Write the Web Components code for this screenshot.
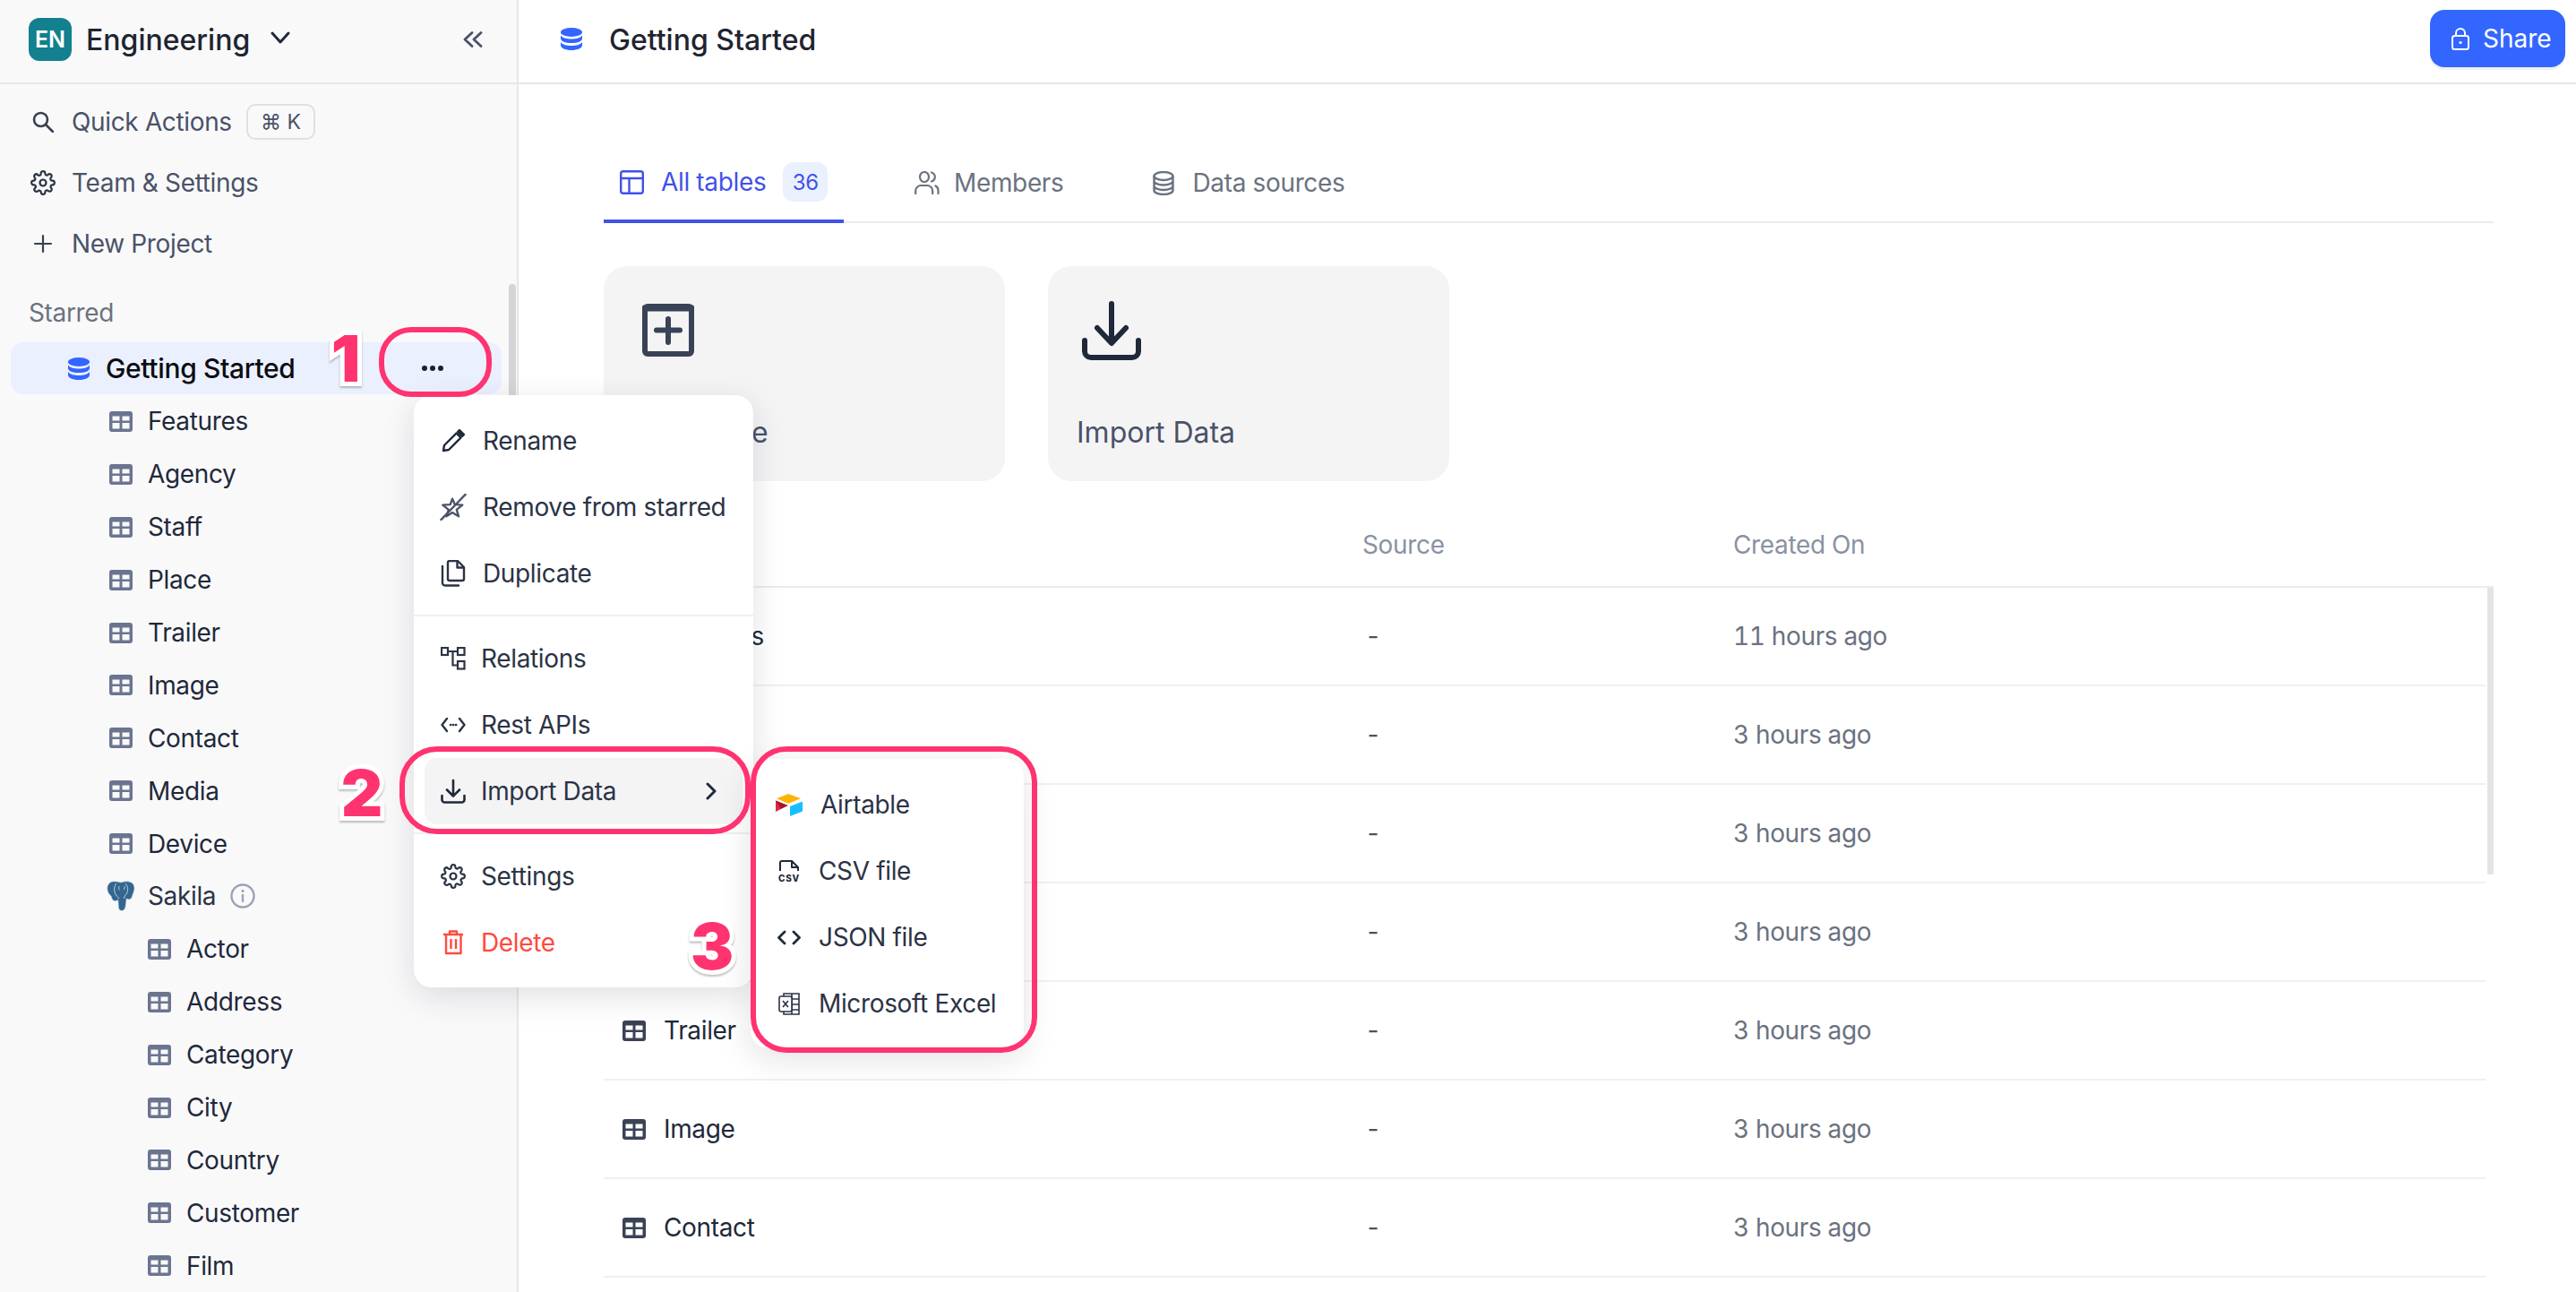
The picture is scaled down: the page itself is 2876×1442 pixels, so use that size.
<!DOCTYPE html>
<html>
<head>
<meta charset="utf-8">
<title>Getting Started</title>
<style>
    html, body { margin: 0; padding: 0; width: 2876px; height: 1442px; overflow: hidden; background: #fff; }
    body { font-family: Inter, "Liberation Sans", sans-serif; font-size: 28px; letter-spacing: -.35px; color: #1f293a; }
</style>
</head>
<body>
<app-shell>
    <side-bar slot="side"></side-bar>
    <top-bar slot="top" title="Getting Started"></top-bar>
    <tab-bar slot="main"></tab-bar>
    <action-cards slot="main"></action-cards>
    <table-list slot="main"></table-list>
</app-shell>

<ctx-menu style="left:462px;top:441px;width:379px">
    <menu-item icon="pencil" nudge="1">Rename</menu-item>
    <menu-item icon="unstar" nudge="1">Remove from starred</menu-item>
    <menu-item icon="copy" nudge="1">Duplicate</menu-item>
    <menu-line></menu-line>
    <menu-item icon="relations" nudge="-1">Relations</menu-item>
    <menu-item icon="api" nudge="-1">Rest APIs</menu-item>
    <menu-item icon="download" nudge="-1" active arrow>Import Data</menu-item>
    <menu-line></menu-line>
    <menu-item icon="gear" nudge="-1">Settings</menu-item>
    <menu-item icon="trash" nudge="-1" danger>Delete</menu-item>
</ctx-menu>

<ctx-menu style="left:838px;top:847px;width:305px">
    <menu-item icon="airtable" nudge="2" wide>Airtable</menu-item>
    <menu-item icon="csv" wide>CSV file</menu-item>
    <menu-item icon="code" wide>JSON file</menu-item>
    <menu-item icon="excel" wide>Microsoft Excel</menu-item>
</ctx-menu>

<call-out style="left:423px;top:365px;width:126px;height:78px;border-radius:36px"></call-out>
<call-out style="left:446px;top:833px;width:392px;height:98px;border-radius:42px"></call-out>
<call-out style="left:838px;top:833px;width:320px;height:342px;border-radius:40px"></call-out>
<call-num style="left:386px;top:400px">1</call-num>
<call-num style="left:404px;top:885px">2</call-num>
<call-num style="left:795px;top:1056px">3</call-num>

<script>
const ICONS = {
    grid: `<svg width="26" height="23" viewBox="0 0 26 23"><path fill="currentColor" fill-rule="evenodd" d="M3 0h20a3 3 0 0 1 3 3v17a3 3 0 0 1-3 3H3a3 3 0 0 1-3-3V3a3 3 0 0 1 3-3zM3.500 5.500V10.500h8V5.500zM14.500 5.500V10.500h8V5.500zM3.500 13v6.500h8V13zM14.500 13v6.500h8V13z"/></svg>`,
    db: `<svg width="24" height="25" viewBox="0 0 24 25" fill="#3366ff"><ellipse cx="12" cy="5" rx="12" ry="5"/><path d="M0 8.500c2 3 7 4 12 4s10-1 12-4V12c0 3-5 5-12 5S0 15 0 12z"/><path d="M0 16c2 3 7 4 12 4s10-1 12-4v3.500c0 3-5 5.500-12 5.500S0 22.500 0 19.500z"/></svg>`,
    search: `<svg width="24" height="24" viewBox="0 0 24 24" fill="none" stroke="#374151" stroke-width="2.600" stroke-linecap="round"><circle cx="9.500" cy="9.500" r="7.500"/><path d="M15 15l8 8"/></svg>`,
    gear: `<svg width="28" height="28" viewBox="0 0 24 24" fill="none" stroke="#2b3345" stroke-width="1.900" stroke-linecap="round" stroke-linejoin="round"><circle cx="12" cy="12" r="3"/><path d="M19.400 15a1.650 1.650 0 0 0 .33 1.820l.06.06a2 2 0 1 1-2.830 2.830l-.06-.06a1.650 1.650 0 0 0-2.820 1.170V21a2 2 0 1 1-4 0v-.09A1.650 1.650 0 0 0 7.260 19.800l-.06.06a2 2 0 1 1-2.830-2.830l.06-.06A1.650 1.650 0 0 0 3.260 14H3a2 2 0 1 1 0-4h.09A1.650 1.650 0 0 0 4.200 7.260l-.06-.06a2 2 0 1 1 2.830-2.830l.06.06A1.650 1.650 0 0 0 10 3.260V3a2 2 0 1 1 4 0v.09a1.650 1.650 0 0 0 2.820 1.170l.06-.06a2 2 0 1 1 2.830 2.830l-.06.06A1.650 1.650 0 0 0 20.740 10H21a2 2 0 1 1 0 4h-.09a1.650 1.650 0 0 0-1.510 1z"/></svg>`,
    plus: `<svg width="22" height="22" viewBox="0 0 22 22" stroke="#374151" stroke-width="2.200" stroke-linecap="round"><path d="M11 2v18M2 11h18"/></svg>`,
    chevDown: `<svg width="22" height="16" viewBox="0 0 22 16" fill="none" stroke="#1f293a" stroke-width="3" stroke-linecap="round" stroke-linejoin="round"><path d="M2 3l9 10 9-10"/></svg>`,
    chevsLeft: `<svg width="22" height="18" viewBox="0 0 22 18" fill="none" stroke="#4a5268" stroke-width="2.800" stroke-linecap="round" stroke-linejoin="round"><path d="M10 1.500L2 9l8 7.500M20 1.500L12 9l8 7.500"/></svg>`,
    elephant: `<svg width="32" height="34" viewBox="0 0 32 34"><path fill="#336791" stroke="#dfe6ee" stroke-width=".7" d="M7 .8c4-.6 7 .6 9 1 3-1 7-1.600 10-.6 4 1.400 5.500 4.600 5 8.500-.5 3-1.800 5.500-2.500 8-.6 2.200-2 3.200-4 3.200-1.200 0-2-.3-2.300-.8-.2 2-.4 5-.9 8-.5 3.300-1.800 5.400-4.300 5.400-2.300 0-3.700-1.500-3.800-4.400-.1-3-.2-5.800-.6-7.600-1 .8-2.700 1.400-4.200 1-2-.5-2.700-3-3.400-5.300C3.500 16 1.300 13.500.8 10 .2 5.500 2.500 1.500 7 .8z"/><path fill="none" stroke="#dfe6ee" stroke-width=".8" d="M11 3c-3 3-3 9-.5 13 1 1.600 2.500 1.800 3 4M21 3c3 3 3.500 8 1 12-1 1.500-2.500 2-2.500 5M14 6c-.6 2-.3 3.500.6 4.500M20 6c.3 1.600 0 3-.8 4"/></svg>`,
    info: `<svg width="28" height="28" viewBox="0 0 28 28" fill="none" stroke="#9aa4b8" stroke-width="2.400" stroke-linecap="round"><circle cx="14" cy="14" r="12.500"/><path d="M14 13v7"/><path d="M14 8.300v.2" stroke-width="3"/></svg>`,
    lock: `<svg width="20" height="25" viewBox="0 0 20 25" fill="none" stroke="#fff" stroke-width="2"><rect x="1" y="9" width="18" height="15" rx="2.500"/><path d="M5 9V6a5 5 0 0 1 10 0v3"/><circle cx="10" cy="16.500" r="1.600" fill="#fff" stroke="none"/></svg>`,
    layout: `<svg width="27" height="27" viewBox="0 0 27 27" fill="none" stroke="#4351e8" stroke-width="2.400" stroke-linejoin="round"><rect x="1.200" y="1.200" width="24.600" height="24.600" rx="2.500"/><path d="M1.200 9h24.600M10.500 9v16.800"/></svg>`,
    members: `<svg width="28" height="26" viewBox="0 0 28 26" fill="none" stroke="#6b7280" stroke-width="2.200" stroke-linecap="round"><ellipse cx="11" cy="6.500" rx="5" ry="5.500"/><path d="M1.200 25v-3c0-3.500 3-6 6-6h7c3 0 6 2.500 6 6v3M19 1.500c2.700.8 3.800 2.800 3.800 5s-1.100 4.200-3.800 5M26.500 25v-3c0-2.500-1-4.500-3-5.500"/></svg>`,
    dbLine: `<svg width="24" height="27" viewBox="0 0 24 27" fill="none" stroke="#6b7280" stroke-width="2.400"><ellipse cx="12" cy="5.500" rx="10.500" ry="4.500"/><path d="M1.500 5.500v16c0 2.500 4.500 4.500 10.500 4.500s10.500-2 10.500-4.500v-16M1.500 11c0 2.500 4.500 4.500 10.500 4.500s10.500-2 10.500-4.500M1.500 16.500c0 2.500 4.500 4.500 10.500 4.500s10.500-2 10.500-4.500"/></svg>`,
    addBox: `<svg width="58" height="59" viewBox="0 0 58 59" fill="none" stroke="#3a4256" stroke-width="6" stroke-linecap="round" stroke-linejoin="round"><rect x="3" y="3" width="52" height="53" rx="3"/><path d="M3 5h52" stroke-width="7"/><path d="M29 17v26M16 29.500h26"/></svg>`,
    bigDownload: `<svg width="66" height="66" viewBox="0 0 66 66" fill="none" stroke="#1f293a" stroke-width="6" stroke-linecap="round" stroke-linejoin="round"><path d="M33 3v43M17 30l16 17 16-17M3 44v12a7 7 0 0 0 7 7h46a7 7 0 0 0 7-7V44"/></svg>`,
    pencil: `<svg width="28" height="28" viewBox="0 0 28 28" fill="none" stroke="#1f293a" stroke-width="2.400" stroke-linejoin="round"><path d="M3 25l1-6L17.500 5.500l5 5L9 24z"/><path d="M21 2l5 5-2 2-5-5z" fill="#1f293a"/></svg>`,
    unstar: `<svg width="30" height="30" viewBox="0 0 32 32" fill="none" stroke="#4a5268" stroke-width="2.500" stroke-linejoin="round"><path d="M15 6l3 7 9 .5-7 5.500 2.500 8L15 22.500 8 27l2.500-8-7-5.500 9-.5z"/><path d="M1.500 31L30.500 1" stroke-linecap="round"/></svg>`,
    copy: `<svg width="28" height="30" viewBox="0 0 28 30" fill="none" stroke="#2b3345" stroke-width="2.400" stroke-linejoin="round"><path d="M8 3a2 2 0 0 1 2-2h9l7 7v13a2 2 0 0 1-2 2H10a2 2 0 0 1-2-2z"/><path d="M18.500 1v7.500H26" /><path d="M2 7v18a3 3 0 0 0 3 3.500h15" stroke-linecap="round"/></svg>`,
    relations: `<svg width="28" height="26" viewBox="0 0 28 26" fill="none" stroke="#2b3345" stroke-width="2.200"><rect x="1" y="1" width="7" height="8"/><rect x="19" y="1" width="7.500" height="8"/><rect x="19" y="16" width="7.500" height="8.500"/><path d="M8 5h11M13.500 5v15.500H19"/></svg>`,
    api: `<svg width="28" height="18" viewBox="0 0 28 18" fill="none" stroke="#2b3345" stroke-width="2.400" stroke-linecap="round" stroke-linejoin="round"><path d="M7 2L1.500 9 7 16M21 2l5.500 7L21 16"/><path d="M11 9h.2M14 9h.2M17 9h.2" stroke-width="2.600"/></svg>`,
    download: `<svg width="28" height="28" viewBox="0 0 28 28" fill="none" stroke="#1f293a" stroke-width="2.600" stroke-linecap="round" stroke-linejoin="round"><path d="M14 2v17M7 12.500l7 7 7-7M1.500 19v4.500a3 3 0 0 0 3 3h19a3 3 0 0 0 3-3V19"/></svg>`,
    trash: `<svg width="24" height="28" viewBox="0 0 24 28" fill="none" stroke="#ff4a3f" stroke-width="2.400" stroke-linejoin="round"><path d="M4 5h16.500v21H4zM1 5h22M8 5V1.500h8V5M9.500 10v11M15 10v11"/></svg>`,
    chevRight: `<svg width="14" height="20" viewBox="0 0 14 20" fill="none" stroke="#1f293a" stroke-width="3" stroke-linecap="round" stroke-linejoin="round"><path d="M3 2l8 8-8 8"/></svg>`,
    airtable: `<svg width="30" height="25" viewBox="0 0 30 25"><path fill="#fcb400" d="M13 .4a3 3 0 0 1 2.500 0L28 5.300 15 10.500a2 2 0 0 1-1.500 0L1 5.300z"/><path fill="#18bfff" d="M16 14l14-5.500V19.500L16 25z"/><path fill="#e0263f" d="M0 7.500L13.500 13 0 20z"/><path fill="#a3162e" d="M0 7.500L13.500 13 6 16.800z"/></svg>`,
    csv: `<svg width="24" height="25" viewBox="0 0 24 25"><path fill="none" stroke="#1f293a" stroke-width="2" stroke-linejoin="round" d="M2 12V3a2 2 0 0 1 2-2h11l7 7v4M15 1v7h7"/><text x="12" y="24" text-anchor="middle" font-family="Inter, Liberation Sans, sans-serif" font-size="10" font-weight="800" letter-spacing=".8" fill="#1f293a">CSV</text></svg>`,
    code: `<svg width="26" height="17" viewBox="0 0 26 17" fill="none" stroke="#1f293a" stroke-width="2.800" stroke-linecap="round" stroke-linejoin="round"><path d="M8 2L1.500 8.500 8 15M18 2l6.500 6.500L18 15"/></svg>`,
    excel: `<svg width="24" height="25" viewBox="0 0 24 25" fill="none" stroke="#2b3345" stroke-width="1.600"><path d="M6 4V1h17v23H6v-3"/><path d="M15 1v23M15 7h8M15 13h8M15 19h8"/><rect x="1" y="4" width="14" height="17" rx="2" fill="#fff"/><path d="M5 9l6 7M11 9l-6 7" stroke-width="1.700"/></svg>`
};

// two column page, sidebar on the left and the rest in a column next to it
class AppShell extends HTMLElement {
    constructor() {
        super();
        this.attachShadow({mode: "open"});
        this.shadowRoot.innerHTML = `
            <style>
                :host { display: flex; width: 2876px; height: 1442px; overflow: hidden; }
                .side { flex: 0 0 579px; height: 100%; }
                .right { flex: 1; min-width: 0; display: flex; flex-direction: column; overflow: hidden; }
                .main { padding: 67px 92px 0 95px; display: flex; flex-direction: column; }
            </style>
            <div class="side"><slot name="side"></slot></div>
            <div class="right">
                <slot name="top"></slot>
                <div class="main"><slot name="main"></slot></div>
            </div>
        `;
    }
}

class SideBar extends HTMLElement {
    constructor() {
        super();
        this.attachShadow({mode: "open"});
        const tables = ["Features", "Agency", "Staff", "Place", "Trailer", "Image", "Contact", "Media", "Device"];
        const nested = ["Actor", "Address", "Category", "City", "Country", "Customer", "Film"];
        this.shadowRoot.innerHTML = `
            <style>
                :host { display: block; position: relative; height: 100%; box-sizing: border-box; background: #f9f9fa; border-right: 2px solid #e7e7e9; overflow: hidden; color: #1f293a; }
                .head { height: 92px; border-bottom: 2px solid #e7e7e9; display: flex; align-items: center; padding-left: 32px; box-sizing: content-box; }
                .avatar { width: 48px; height: 48px; border-radius: 12px; background: #12808f; color: #fff; font-size: 25px; font-weight: 600; letter-spacing: 0; display: flex; align-items: center; justify-content: center; margin-top: -4px; }
                .name { margin-left: 16px; margin-top: -4px; font-size: 32px; font-weight: 500; letter-spacing: 0; color: #1f2430; }
                .chev { margin-left: 23px; display: flex; margin-top: -8px; }
                .collapse { margin-left: auto; margin-right: 38px; display: flex; margin-top: -4px; }
                .nav { padding-top: 8px; }
                .nav-row { height: 68px; display: flex; align-items: center; color: #4a5268; }
                .nav-ic { width: 80px; flex: none; display: flex; justify-content: center; padding-left: 16px; box-sizing: border-box; }
                .kbd { margin-left: 16px; height: 40px; width: 77px; box-sizing: border-box; border: 2px solid #dfe0e4; border-radius: 10px; font-size: 23px; display: flex; align-items: center; justify-content: center; gap: 7px; }
                .label { margin-top: 9px; height: 67px; padding-left: 32px; display: flex; align-items: center; color: #6b7280; }
                .current { margin: 0 17px 0 12px; height: 58px; border-radius: 14px; background: #ebf0fe; display: flex; align-items: center; padding-left: 64px; color: #0b0d12; font-size: 30px; font-weight: 500; }
                .current .txt { margin-left: 18px; }
                .dots { position: absolute; left: 471px; top: 408px; display: flex; gap: 3px; }
                .dots i { width: 6px; height: 6px; border-radius: 50%; background: #1a2030; }
                .bar { position: absolute; left: 568px; top: 317px; width: 8px; height: 200px; border-radius: 4px; background: #d4d4d9; }
                .tree { padding-top: 1px; }
                .row { height: 58.900px; display: flex; align-items: center; padding-left: 122px; color: #1f293a; }
                .row .ic { color: #6b7590; display: flex; width: 43px; flex: none; }
                .row.sub { padding-left: 165px; }
                .row.db { padding-left: 119px; color: #2b3345; }
                .row.db .ic { width: 46px; }
                .row.db .info { margin-left: 16px; display: flex; }
            </style>
            <div class="head">
                <div class="avatar">EN</div>
                <div class="name">Engineering</div>
                <div class="chev">${ICONS.chevDown}</div>
                <div class="collapse">${ICONS.chevsLeft}</div>
            </div>
            <div class="nav">
                <div class="nav-row"><div class="nav-ic">${ICONS.search}</div>Quick Actions<div class="kbd"><span>⌘</span><span>K</span></div></div>
                <div class="nav-row"><div class="nav-ic">${ICONS.gear}</div>Team &amp; Settings</div>
                <div class="nav-row"><div class="nav-ic">${ICONS.plus}</div>New Project</div>
            </div>
            <div class="label">Starred</div>
            <div class="current">${ICONS.db}<span class="txt">Getting Started</span></div>
            <div class="dots"><i></i><i></i><i></i></div>
            <div class="bar"></div>
            <div class="tree">
                ${tables.map(t => `<div class="row"><span class="ic">${ICONS.grid}</span>${t}</div>`).join("")}
                <div class="row db"><span class="ic">${ICONS.elephant}</span>Sakila<span class="info">${ICONS.info}</span></div>
                ${nested.map(t => `<div class="row sub"><span class="ic">${ICONS.grid}</span>${t}</div>`).join("")}
            </div>
        `;
    }
}

class TopBar extends HTMLElement {
    constructor() {
        super();
        this.attachShadow({mode: "open"});
        this.shadowRoot.innerHTML = `
            <style>
                :host { display: flex; flex: none; align-items: center; height: 92px; border-bottom: 2px solid #e7e7e9; padding: 0 12px 0 47px; }
                .title { margin-left: 30px; font-size: 32px; font-weight: 500; letter-spacing: 0; color: #1f2430; margin-top: -4px; }
                .ic { display: flex; margin-top: -6px; }
                button { margin-left: auto; margin-top: -6px; width: 151px; height: 64px; border: 0; border-radius: 16px; background: #3366ff; color: #fff; font: inherit; display: flex; align-items: center; padding: 0 0 0 24px; gap: 15px; box-shadow: 0 3px 0 #f0f0f2; }
            </style>
            <span class="ic">${ICONS.db}</span>
            <span class="title">${this.getAttribute("title")}</span>
            <button>${ICONS.lock}<span>Share</span></button>
        `;
    }
}

class TabBar extends HTMLElement {
    constructor() {
        super();
        this.attachShadow({mode: "open"});
        this.shadowRoot.innerHTML = `
            <style>
                :host { display: flex; flex: none; height: 88px; box-sizing: border-box; border-bottom: 2px solid #ececee; color: #6b7280; }
                .tab { display: flex; align-items: center; height: 86px; box-sizing: border-box; position: relative; }
                .ic { display: flex; }
                .all { width: 268px; padding-left: 18px; color: #4351e8; border-bottom: 4px solid #4351e8; height: 88px; padding-bottom: 0; }
                .all .txt { margin-left: 19px; }
                .badge { margin-left: 19px; width: 50px; height: 44px; border-radius: 12px; background: #ebf0fe; font-size: 24px; display: flex; align-items: center; justify-content: center; }
                .members { margin-left: 79px; }
                .members .txt { margin-left: 16px; }
                .sources { margin-left: 100px; }
                .sources .txt { margin-left: 20px; }
            </style>
            <div class="tab all"><span class="ic">${ICONS.layout}</span><span class="txt">All tables</span><span class="badge">36</span></div>
            <div class="tab members"><span class="ic">${ICONS.members}</span><span class="txt">Members</span></div>
            <div class="tab sources"><span class="ic">${ICONS.dbLine}</span><span class="txt">Data sources</span></div>
        `;
    }
}

class ActionCards extends HTMLElement {
    constructor() {
        super();
        this.attachShadow({mode: "open"});
        this.shadowRoot.innerHTML = `
            <style>
                :host { display: flex; flex: none; gap: 48px; margin-top: 48px; }
                .card { width: 448px; height: 240px; border-radius: 26px; background: #f4f4f5; position: relative; display: flex; flex-direction: column; padding-left: 32px; box-sizing: border-box; color: #4a5268; font-size: 32px; letter-spacing: 0; }
                .ic { height: 167px; box-sizing: border-box; display: flex; align-items: flex-start; }
                .a .ic { padding: 42px 0 0 11px; }
                .b .ic { padding: 39px 0 0 6px; }
                .a .t { letter-spacing: -1px; }
                .t { height: 38px; line-height: 38px; }
            </style>
            <div class="card a"><div class="ic">${ICONS.addBox}</div><div class="t">New Table</div></div>
            <div class="card b"><div class="ic">${ICONS.bigDownload}</div><div class="t">Import Data</div></div>
        `;
    }
}

class TableList extends HTMLElement {
    constructor() {
        super();
        this.attachShadow({mode: "open"});
        const rows = [
            ["Features", "11 hours ago"], ["Agency", "3 hours ago"], ["Staff", "3 hours ago"],
            ["Place", "3 hours ago"], ["Trailer", "3 hours ago"], ["Image", "3 hours ago"],
            ["Contact", "3 hours ago"]
        ];
        this.shadowRoot.innerHTML = `
            <style>
                :host { display: block; flex: none; position: relative; padding-right: 9px; font-variant-numeric: tabular-nums; }
                .r { display: grid; grid-template-columns: 847px 414px 1fr; align-items: center; box-sizing: border-box; }
                .head { height: 119px; padding-top: 25px; color: #8a92a3; border-bottom: 2px solid #ececee; margin-right: -9px; }
                .row { height: 110px; border-bottom: 2px solid #f0f0f2; color: #6b7280; }
                .name { display: flex; align-items: center; padding-left: 21px; color: #1f293a; }
                .name svg { color: #3a4256; margin-right: 20px; }
                .dash { padding-left: 3px; color: #4a5268; }
                .bar { position: absolute; right: 0; top: 119px; width: 7px; height: 320px; background: #e4e4e7; }
            </style>
            <div class="r head"><span></span><span>Source</span><span>Created On</span></div>
            ${rows.map(r => `<div class="r row"><span class="name">${ICONS.grid}${r[0]}</span><span class="dash">-</span><span>${r[1]}</span></div>`).join("")}
            <div class="bar"></div>
        `;
    }
}

// floating panels over the page, placed with inline left/top
class CtxMenu extends HTMLElement {
    constructor() {
        super();
        this.attachShadow({mode: "open"});
        this.shadowRoot.innerHTML = `
            <style>
                :host { display: block; position: absolute; box-sizing: border-box; background: #fff; border-radius: 20px; padding: 14px 0 13px; box-shadow: 0 10px 36px rgba(20, 24, 40, .13); }
            </style>
            <slot></slot>
        `;
    }
}

class MenuItem extends HTMLElement {
    constructor() {
        super();
        this.attachShadow({mode: "open"});
        const wide = this.hasAttribute("wide");
        const nudge = Number(this.getAttribute("nudge") || 0);
        this.shadowRoot.innerHTML = `
            <style>
                :host { display: block; }
                .it { height: 74px; margin: 0 12px; display: flex; align-items: center; border-radius: 14px; color: #2b3345; padding-left: ${wide ? 15 : 18}px; position: relative; }
                :host([active]) .it { background: #f4f4f5; }
                :host([danger]) .it { color: #ff4a3f; }
                .ic { width: ${wide ? 32 : 28}px; flex: none; display: flex; justify-content: center; }
                .ic svg { flex: none; }
                .t { margin-left: ${(wide ? 17 : 18) + nudge}px; }
                .arrow { position: absolute; right: 28px; top: 27px; display: flex; }
            </style>
            <div class="it">
                <span class="ic">${ICONS[this.getAttribute("icon")]}</span>
                <span class="t"><slot></slot></span>
                ${this.hasAttribute("arrow") ? `<span class="arrow">${ICONS.chevRight}</span>` : ""}
            </div>
        `;
    }
}

class MenuLine extends HTMLElement {
    constructor() {
        super();
        this.attachShadow({mode: "open"});
        this.shadowRoot.innerHTML = `<style>:host { display: block; height: 2px; margin: 9px 0 10px; background: #f0f0f2; }</style>`;
    }
}

class CallOut extends HTMLElement {
    constructor() {
        super();
        this.attachShadow({mode: "open"});
        this.shadowRoot.innerHTML = `<style>:host { display: block; position: absolute; box-sizing: border-box; border: 6px solid #ff3370; }</style>`;
    }
}

class CallNum extends HTMLElement {
    constructor() {
        super();
        this.attachShadow({mode: "open"});
        this.shadowRoot.innerHTML = `
            <style>
                :host { display: block; position: absolute; transform: translate(-50%, -50%); font-family: Inter, "Liberation Sans", sans-serif; font-size: 72px; font-weight: 900; letter-spacing: 0; line-height: 1; color: #ff3370; -webkit-text-stroke: 10px #fff; paint-order: stroke fill; filter: drop-shadow(0 2px 1px rgba(0, 0, 0, .25)); }
            </style>
            <slot></slot>
        `;
    }
}

customElements.define("app-shell", AppShell);
customElements.define("side-bar", SideBar);
customElements.define("top-bar", TopBar);
customElements.define("tab-bar", TabBar);
customElements.define("action-cards", ActionCards);
customElements.define("table-list", TableList);
customElements.define("ctx-menu", CtxMenu);
customElements.define("menu-item", MenuItem);
customElements.define("menu-line", MenuLine);
customElements.define("call-out", CallOut);
customElements.define("call-num", CallNum);
</script>
</body>
</html>
